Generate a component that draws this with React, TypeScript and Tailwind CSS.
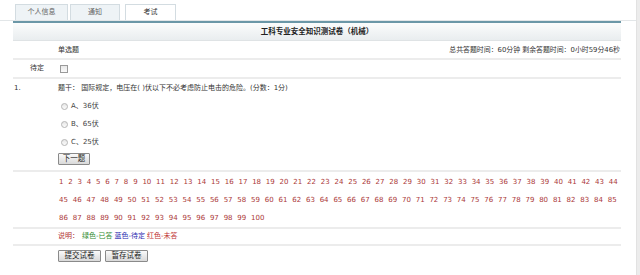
import React from "react";

const rows = [
  Array.from({ length: 44 }, (_, i) => i + 1),
  Array.from({ length: 41 }, (_, i) => i + 45),
  Array.from({ length: 15 }, (_, i) => i + 86),
];

const options = ["A、36伏", "B、65伏", "C、25伏"];

function Btn({ children, className = "" }: { children: React.ReactNode; className?: string }) {
  return (
    <button
      type="button"
      className={`h-[12px] border border-[#8a8a8a] rounded-[1px] bg-gradient-to-b from-[#fafafa] to-[#d9d9d9] text-[7.5px] leading-none text-[#222] ${className}`}
    >
      {children}
    </button>
  );
}

export default function App() {
  return (
    <div
      className="w-[640px] h-[275px] bg-white flex overflow-hidden text-[7px] text-[#333]"
      style={{ fontFamily: '"DejaVu Sans", "Noto Sans CJK SC", sans-serif' }}
    >
      <div className="flex-1 flex flex-col">
        {/* Tabs */}
        <div className="h-[21px] border-b border-[#e2e6e8] flex items-end pl-[15px] gap-[2px]">
          <div className="w-[53px] h-[16px] flex items-center justify-center bg-[#eef3f6] border border-b-0 border-[#d3dce1] text-[#666]">
            个人信息
          </div>
          <div className="w-[50px] h-[16px] flex items-center justify-center bg-[#eef3f6] border border-b-0 border-[#d3dce1] text-[#666]">
            通知
          </div>
          <div className="ml-[3px] w-[51px] h-[16px] flex items-center justify-center bg-white border border-b-0 border-[#d3dce1] text-[#333]">
            考试
          </div>
        </div>

        {/* Paper */}
        <div className="ml-[13px] w-[608px] border-t-2 border-[#6b97a7]">
          <div className="h-[18px] flex items-center justify-center bg-gradient-to-b from-[#fbfcfc] to-[#e9edef] font-bold text-[7.5px] text-[#222] border-b border-[#dfe3e5]">
            工科专业安全知识测试卷（机械）
          </div>

          <div className="h-[19px] flex items-center border-b-2 border-[#ececec]">
            <div className="w-[45px]" />
            <div className="flex-1 pt-[2px]">单选题</div>
            <div className="pr-[1px] pt-[1px] text-[6.9px]">总共答题时间：60分钟 剩余答题时间：0小时59分46秒</div>
          </div>

          <div className="h-[19px] flex items-center border-b-2 border-[#ececec]">
            <div className="w-[45px] pl-[17px]">待定</div>
            <div className="pl-[2px]">
              <div className="w-[8px] h-[8px] border border-[#9a9a9a] bg-gradient-to-b from-[#e8e8e8] to-[#fafafa]" />
            </div>
          </div>

          <div className="flex border-b-2 border-[#ececec] pb-[5px]">
            <div className="w-[45px] pl-[1px] leading-[18px]">1.</div>
            <div className="flex flex-col">
              <div className="leading-[18px]">题干： 国际规定，电压在( )伏以下不必考虑防止电击的危险。(分数：1分)</div>
              {options.map((o) => (
                <div key={o} className="h-[18px] flex items-center gap-[3px] pl-[3px]">
                  <div className="w-[7px] h-[7px] rounded-full border border-[#b5b5b5] bg-gradient-to-b from-[#e6e6e6] to-[#fbfbfb]" />
                  <span className="text-[#444]">{o}</span>
                </div>
              ))}
              <div className="pt-[2px]">
                <Btn className="w-[32px]">下一题</Btn>
              </div>
            </div>
          </div>

          <div className="border-b-2 border-[#ececec] pt-[1px] pl-[45px] text-[7px] text-[#ab3838]">
            {rows.map((r, i) => (
              <div key={i} className="h-[18px] flex items-center gap-[4.8px] pl-[1px]">
                {r.map((n) => (
                  <span key={n}>{n}</span>
                ))}
              </div>
            ))}
          </div>

          <div className="h-[17px] flex items-center border-b-2 border-[#ececec] pl-[45px]">
            <span className="text-[#b03030]">说明：</span>
            <span className="ml-[3px] text-[#2e8b2e]">绿色-已答</span>
            <span className="ml-[2px] text-[#2a2ab0]">蓝色-待定</span>
            <span className="ml-[2px] text-[#c03030]">红色-未答</span>
          </div>

          <div className="pt-[4px] pl-[45px] flex gap-[4px]">
            <Btn className="w-[43px]">提交试卷</Btn>
            <Btn className="w-[43px]">暂存试卷</Btn>
          </div>
        </div>
      </div>
      <div className="w-[4px] bg-[#ececec] border-l border-[#e2e2e2]" />
    </div>
  );
}
